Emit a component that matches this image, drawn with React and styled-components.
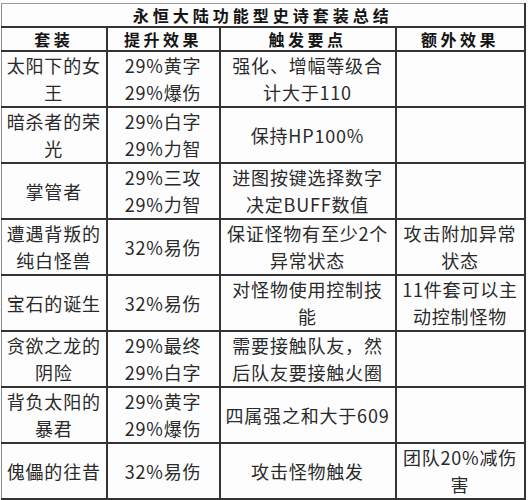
import styled, { createGlobalStyle } from "styled-components"

const GlobalStyle = createGlobalStyle`
  html, body {
    margin: 0;
    padding: 0;
    background: #fdfdfd;
  }
  body {
    font-family: "Noto Sans CJK SC", "Noto Sans", sans-serif;
    color: #222;
  }
`

const rows = [
  { name: ["太阳下的女", "王"], boost: ["29%黄字", "29%爆伤"], trigger: ["强化、增幅等级合", "计大于110"], extra: [] },
  { name: ["暗杀者的荣", "光"], boost: ["29%白字", "29%力智"], trigger: ["保持HP100%"], extra: [] },
  { name: ["掌管者"], boost: ["29%三攻", "29%力智"], trigger: ["进图按键选择数字", "决定BUFF数值"], extra: [] },
  { name: ["遭遇背叛的", "纯白怪兽"], boost: ["32%易伤"], trigger: ["保证怪物有至少2个", "异常状态"], extra: ["攻击附加异常", "状态"] },
  { name: ["宝石的诞生"], boost: ["32%易伤"], trigger: ["对怪物使用控制技", "能"], extra: ["11件套可以主", "动控制怪物"] },
  { name: ["贪欲之龙的", "阴险"], boost: ["29%最终", "29%白字"], trigger: ["需要接触队友，然", "后队友要接触火圈"], extra: [] },
  { name: ["背负太阳的", "暴君"], boost: ["29%黄字", "29%爆伤"], trigger: ["四属强之和大于609"], extra: [] },
  { name: ["傀儡的往昔"], boost: ["32%易伤"], trigger: ["攻击怪物触发"], extra: ["团队20%减伤", "害"] },
]

const Page = styled.div`
  padding: 3px 4px 0 1px;
`

const Table = styled.table`
  width: 523px;
  border-collapse: collapse;
  table-layout: fixed;
  border-left: 1px solid #8a8a8a;
  border-top: 1px solid #9a9a9a;
`

const Title = styled.th`
  height: 22px;
  padding: 0;
  font-size: 16px;
  font-weight: 700;
  letter-spacing: 4px;
  line-height: 22px;
  color: #141414;
  border-bottom: 2px solid #333;
  border-right: 2px solid #333;
`

const HeadCell = styled.th`
  height: 22px;
  padding: 0;
  font-size: 16px;
  font-weight: 700;
  letter-spacing: 3.5px;
  line-height: 22px;
  color: #141414;
  border: 2px solid #333;
  border-left-width: ${(p) => (p.$first ? "0" : "2px")};
`

const Cell = styled.td`
  height: 53.5px;
  padding: 0 1px;
  text-align: center;
  vertical-align: middle;
  font-size: 18px;
  letter-spacing: 0.8px;
  line-height: 27px;
  white-space: nowrap;
  overflow: hidden;
  color: #2a2a2a;
  border: 2px solid #333;
  border-left-width: ${(p) => (p.$first ? "0" : "2px")};
`

const Line = styled.div`
  display: block;
`

const Lines = ({ items }) => items.map((t, i) => <Line key={i}>{t}</Line>)

export default function App() {
  return (
    <Page>
      <GlobalStyle />
      <Table>
        <colgroup>
          <col style={{ width: 105 }} />
          <col style={{ width: 113 }} />
          <col style={{ width: 176 }} />
          <col style={{ width: 129 }} />
        </colgroup>
        <thead>
          <tr>
            <Title colSpan={4}>永恒大陆功能型史诗套装总结</Title>
          </tr>
          <tr>
            <HeadCell $first>套装</HeadCell>
            <HeadCell>提升效果</HeadCell>
            <HeadCell>触发要点</HeadCell>
            <HeadCell>额外效果</HeadCell>
          </tr>
        </thead>
        <tbody>
          {rows.map((r, i) => (
            <tr key={i}>
              <Cell $first>
                <Lines items={r.name} />
              </Cell>
              <Cell>
                <Lines items={r.boost} />
              </Cell>
              <Cell>
                <Lines items={r.trigger} />
              </Cell>
              <Cell>
                <Lines items={r.extra} />
              </Cell>
            </tr>
          ))}
        </tbody>
      </Table>
    </Page>
  )
}
